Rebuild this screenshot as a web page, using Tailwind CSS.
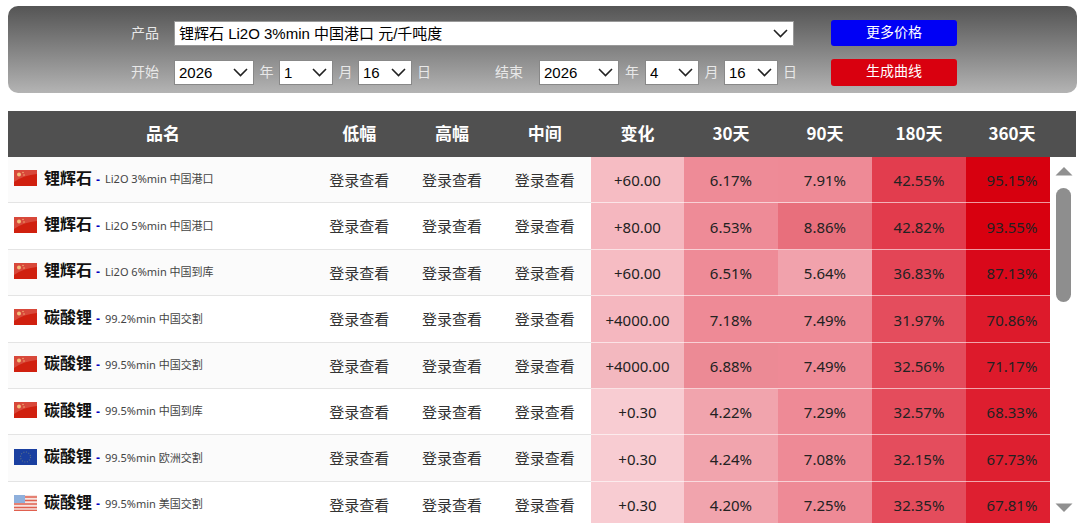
<!DOCTYPE html>
<html lang="zh-CN">
<head>
  <meta charset="UTF-8">
  <meta name="viewport" content="width=device-width, initial-scale=1.0">
  <title>价格表</title>
  <script src="https://cdn.jsdelivr.net/npm/@tailwindcss/browser@4"></script>
</head>
<body class="relative bg-white w-[1080px] h-[528px] overflow-hidden font-['Liberation_Sans','Noto_Sans_CJK_SC',sans-serif]">
  <!-- filter bar -->
  <div class="mx-[8px] mt-[6px] w-[1069px] h-[87px] rounded-[10px] bg-gradient-to-b from-[#555555] to-[#b4b4b4] flex text-[14px] text-[#e8e8e8]">
    <div class="ml-[123px] pt-[15px] flex flex-col gap-[14px]">
      <div class="flex items-center h-[25px]">
        <span class="w-[43px]">产品</span>
        <div class="relative w-[620px] h-[25px]">
          <select class="appearance-none w-full h-full bg-white text-black text-[15px] pl-[4px] pt-[1px] border border-[#999]"><option>锂辉石 Li2O 3%min 中国港口 元/千吨度</option></select>
          <svg class="absolute right-[6px] top-[8px] pointer-events-none" width="15" height="9" viewBox="0 0 15 9"><path d="M1 1l6.5 6.5L14 1" fill="none" stroke="#222" stroke-width="1.6"/></svg>
        </div>
      </div>
      <div class="flex items-center h-[25px]">
        <span class="w-[43px]">开始</span>
        <div class="relative w-[80px] h-[25px]">
          <select class="appearance-none w-full h-full bg-white text-black text-[15px] pl-[4px] pt-[1px] border border-[#888]"><option>2026</option></select>
          <svg class="absolute right-[6px] top-[8px] pointer-events-none" width="15" height="9" viewBox="0 0 15 9"><path d="M1 1l6.5 6.5L14 1" fill="none" stroke="#222" stroke-width="1.6"/></svg>
        </div>
        <span class="w-[25px] text-center">年</span>
        <div class="relative w-[54px] h-[25px]">
          <select class="appearance-none w-full h-full bg-white text-black text-[15px] pl-[4px] pt-[1px] border border-[#888]"><option>1</option></select>
          <svg class="absolute right-[6px] top-[8px] pointer-events-none" width="15" height="9" viewBox="0 0 15 9"><path d="M1 1l6.5 6.5L14 1" fill="none" stroke="#222" stroke-width="1.6"/></svg>
        </div>
        <span class="w-[25px] text-center">月</span>
        <div class="relative w-[54px] h-[25px]">
          <select class="appearance-none w-full h-full bg-white text-black text-[15px] pl-[4px] pt-[1px] border border-[#888]"><option>16</option></select>
          <svg class="absolute right-[6px] top-[8px] pointer-events-none" width="15" height="9" viewBox="0 0 15 9"><path d="M1 1l6.5 6.5L14 1" fill="none" stroke="#222" stroke-width="1.6"/></svg>
        </div>
        <span class="w-[24px] text-center">日</span>
        <span class="ml-[59px] w-[44px]">结束</span>
        <div class="relative w-[80px] h-[25px]">
          <select class="appearance-none w-full h-full bg-white text-black text-[15px] pl-[4px] pt-[1px] border border-[#888]"><option>2026</option></select>
          <svg class="absolute right-[6px] top-[8px] pointer-events-none" width="15" height="9" viewBox="0 0 15 9"><path d="M1 1l6.5 6.5L14 1" fill="none" stroke="#222" stroke-width="1.6"/></svg>
        </div>
        <span class="w-[26px] text-center">年</span>
        <div class="relative w-[54px] h-[25px]">
          <select class="appearance-none w-full h-full bg-white text-black text-[15px] pl-[4px] pt-[1px] border border-[#888]"><option>4</option></select>
          <svg class="absolute right-[6px] top-[8px] pointer-events-none" width="15" height="9" viewBox="0 0 15 9"><path d="M1 1l6.5 6.5L14 1" fill="none" stroke="#222" stroke-width="1.6"/></svg>
        </div>
        <span class="w-[25px] text-center">月</span>
        <div class="relative w-[54px] h-[25px]">
          <select class="appearance-none w-full h-full bg-white text-black text-[15px] pl-[4px] pt-[1px] border border-[#888]"><option>16</option></select>
          <svg class="absolute right-[6px] top-[8px] pointer-events-none" width="15" height="9" viewBox="0 0 15 9"><path d="M1 1l6.5 6.5L14 1" fill="none" stroke="#222" stroke-width="1.6"/></svg>
        </div>
        <span class="w-[24px] text-center">日</span>
      </div>
    </div>
    <div class="absolute left-[831px] top-[20px] flex flex-col gap-[13px]">
      <button class="w-[126px] h-[26px] pb-[2px] rounded-[3px] bg-[#0000f5] text-white text-[14px]">更多价格</button>
      <button class="w-[126px] h-[27px] pb-[2px] rounded-[3px] bg-[#d9000f] text-white text-[14px]">生成曲线</button>
    </div>
  </div>

  <!-- header -->
  <div class="mt-[18px] ml-[8px] w-[1068px] h-[46px] pb-[2px] bg-[#505050] text-white font-bold text-[17px] grid grid-cols-[305px_repeat(3,92.67px)_93px_94px_94px_94px_92px] items-center text-center font-['Noto_Sans_CJK_SC','Liberation_Sans',sans-serif]">
    <div class="pl-[5px]">品名</div><div>低幅</div><div>高幅</div><div>中间</div><div>变化</div><div>30天</div><div>90天</div><div>180天</div><div>360天</div>
  </div>

  <!-- rows, last one is cut off by the scroll area -->
  <div class="ml-[8px] w-[1042px] h-[365.5px] overflow-hidden" id="rows"></div>

  <!-- scrollbar -->
  <svg class="absolute left-[1055px] top-[166px]" width="18" height="10" viewBox="0 0 18 10"><path d="M0.5 9.5L9 1l8.5 8.5z" fill="#909090"/></svg>
  <div class="absolute left-[1056px] top-[188px] w-[15px] h-[114px] rounded-full bg-[#8e8e8e]"></div>
  <svg class="absolute left-[1055px] top-[503px]" width="18" height="10" viewBox="0 0 18 10"><path d="M0.5 0.5L9 9l8.5-8.5z" fill="#909090"/></svg>

  <script>
    const shine = `<path d="M0 0h23v4Q10 5 0 12z" fill="#fff" opacity=".18"/>`;
    const cn = `<svg width="23" height="16" viewBox="0 0 23 16" class="shrink-0 mb-[1px]"><rect width="23" height="16" fill="#d0200f"/><circle cx="5" cy="4.5" r="2" fill="#f0b060"/><circle cx="9" cy="2.5" r=".7" fill="#f0b060"/><circle cx="10" cy="5" r=".7" fill="#f0b060"/>${shine}</svg>`;
    const eu = `<svg width="23" height="16" viewBox="0 0 23 16" class="shrink-0 mb-[1px]"><rect width="23" height="16" fill="#1a3fa0"/><circle cx="11.5" cy="8" r="5" fill="none" stroke="#5a6f8a" stroke-width="1.2" stroke-dasharray="1 1.6"/></svg>`;
    const us = `<svg width="23" height="16" viewBox="0 0 23 16" class="shrink-0 mb-[1px]"><rect width="23" height="16" fill="#f6e4e0"/><path d="M0 2h23M0 5.5h23M0 9h23M0 12.5h23M0 15.5h23" stroke="#e0604f" stroke-width="1.4"/><rect width="11" height="8" fill="#8fb0dc"/></svg>`;

    const rows = [
      [cn, '锂辉石', 'Li2O 3%min 中国港口', 'bg-[#f6bcc3]', '+60.00', 'bg-[#ee8b97]', '6.17%', 'bg-[#ee8a96]', '7.91%', 'bg-[#e23d4e]', '42.55%', 'bg-[#d7000f]', '95.15%'],
      [cn, '锂辉石', 'Li2O 5%min 中国港口', 'bg-[#f5b7bf]', '+80.00', 'bg-[#ee8b97]', '6.53%', 'bg-[#e86f7c]', '8.86%', 'bg-[#e23b4c]', '42.82%', 'bg-[#d8000f]', '93.55%'],
      [cn, '锂辉石', 'Li2O 6%min 中国到库', 'bg-[#f6bcc3]', '+60.00', 'bg-[#ee8b97]', '6.51%', 'bg-[#f1a2ac]', '5.64%', 'bg-[#e34556]', '36.83%', 'bg-[#d9081a]', '87.13%'],
      [cn, '碳酸锂', '99.2%min 中国交割', 'bg-[#f5b7bf]', '+4000.00', 'bg-[#ee8a96]', '7.18%', 'bg-[#ee8a96]', '7.49%', 'bg-[#e44d5d]', '31.97%', 'bg-[#dd1a2b]', '70.86%'],
      [cn, '碳酸锂', '99.5%min 中国交割', 'bg-[#f3b8bf]', '+4000.00', 'bg-[#ec8a95]', '6.88%', 'bg-[#ee8a96]', '7.49%', 'bg-[#e44c5c]', '32.56%', 'bg-[#dd1a2b]', '71.17%'],
      [cn, '碳酸锂', '99.5%min 中国到库', 'bg-[#f8ccd2]', '+0.30', 'bg-[#f1a4ad]', '4.22%', 'bg-[#ee8a96]', '7.29%', 'bg-[#e44c5c]', '32.57%', 'bg-[#de1e2f]', '68.33%'],
      [eu, '碳酸锂', '99.5%min 欧洲交割', 'bg-[#f8ccd2]', '+0.30', 'bg-[#f1a4ad]', '4.24%', 'bg-[#ee8a96]', '7.08%', 'bg-[#e44d5d]', '32.15%', 'bg-[#de1f30]', '67.73%'],
      [us, '碳酸锂', '99.5%min 美国交割', 'bg-[#f8ccd2]', '+0.30', 'bg-[#f1a4ad]', '4.20%', 'bg-[#ee8a96]', '7.25%', 'bg-[#e44c5c]', '32.35%', 'bg-[#de1f30]', '67.81%'],
    ];

    let html = '';
    rows.forEach((r, i) => {
      const stripe = i % 2 ? 'bg-white' : 'bg-[#fbfbfb]';
      let cells = '';
      for (let c = 3; c < r.length; c += 2) {
        cells += `<div class="${r[c]} flex items-center justify-center pt-[2px] border-b border-white/60 text-[15px] text-[#222] font-['Noto_Sans','Noto_Sans_CJK_SC',sans-serif] ${c === 11 ? 'pl-[8px]' : ''}">${r[c + 1]}</div>`;
      }
      html += `<div class="grid grid-cols-[305px_repeat(3,92.67px)_93px_94px_94px_94px_84px] h-[46.4px] ${stripe}">
        <div class="flex items-center pl-[6px] pb-[2px] border-b border-[#e4e4e4]">${r[0]}<span class="ml-[7px] text-[16px] font-bold text-[#111]">${r[1]}</span><span class="ml-[4px] mt-[2px] text-[#0000c0] font-bold text-[12px]">-</span><span class="ml-[5px] mt-[2px] text-[11px] text-[#444] font-['Noto_Sans','Noto_Sans_CJK_SC',sans-serif]">${r[2]}</span></div>
        <div class="flex items-center justify-center pt-[3px] border-b border-[#e4e4e4] text-[15px] text-[#333]">登录查看</div>
        <div class="flex items-center justify-center pt-[3px] border-b border-[#e4e4e4] text-[15px] text-[#333]">登录查看</div>
        <div class="flex items-center justify-center pt-[3px] border-b border-[#e4e4e4] text-[15px] text-[#333]">登录查看</div>
        ${cells}
      </div>`;
    });
    document.getElementById('rows').innerHTML = html;
  </script>
</body>
</html>
